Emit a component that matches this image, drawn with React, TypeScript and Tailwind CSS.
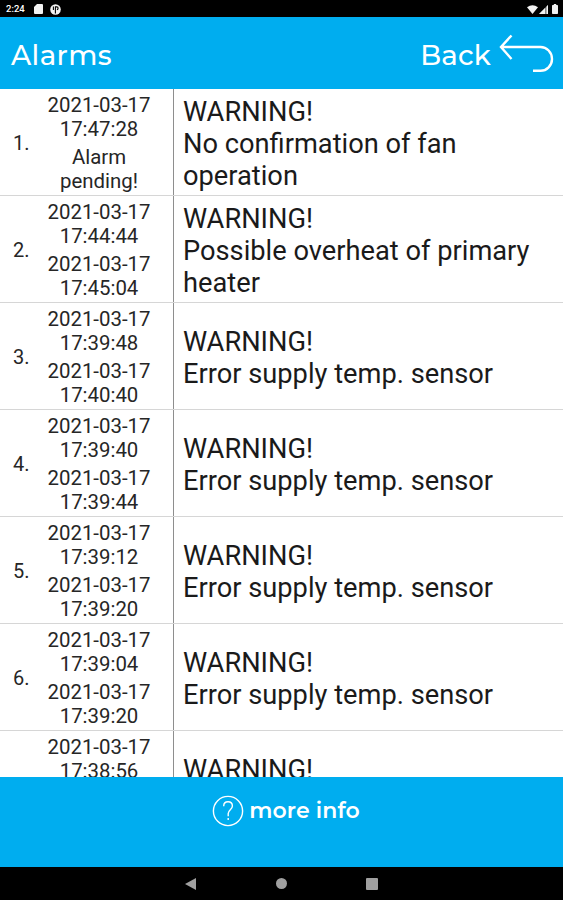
interface Alarm {
  raised: string
  // lines of the lower stamp, either a date and a time or a status
  cleared: [string, string]
  message: string
}

const day = "2021-03-17"

const alarms: Alarm[] = [
  { raised: "17:47:28", cleared: ["Alarm", "pending!"], message: "No confirmation of fan operation" },
  { raised: "17:44:44", cleared: [day, "17:45:04"], message: "Possible overheat of primary heater" },
  { raised: "17:39:48", cleared: [day, "17:40:40"], message: "Error supply temp. sensor" },
  { raised: "17:39:40", cleared: [day, "17:39:44"], message: "Error supply temp. sensor" },
  { raised: "17:39:12", cleared: [day, "17:39:20"], message: "Error supply temp. sensor" },
  { raised: "17:39:04", cleared: [day, "17:39:20"], message: "Error supply temp. sensor" },
  { raised: "17:38:56", cleared: [day, "17:39:00"], message: "Error supply temp. sensor" },
]

export default function App() {
  return (
    <div className="flex h-[900px] w-[563px] flex-col overflow-hidden bg-white font-[Roboto,sans-serif] text-[#262626]">
      <StatusBar />

      <header className="flex h-[72px] shrink-0 items-center justify-between bg-[#00adef] pt-[3px] pr-[9px] pl-[11px] font-[Montserrat,Inter,sans-serif] text-[27.6px] font-medium text-white">
        <h1 className="pt-[2px] tracking-[0.4px]">Alarms</h1>
        <button className="flex items-center gap-[8px]">
          <span className="pt-[2px] tracking-[0.2px]">Back</span>
          <BackArrow />
        </button>
      </header>

      <main className="min-h-0 flex-1 overflow-hidden">
        {alarms.map((a, i) => (
          <AlarmRow key={i} index={i + 1} alarm={a} />
        ))}
      </main>

      <footer className="flex h-[90px] shrink-0 items-start justify-center bg-[#00adef] pt-[17px] pl-[9px]">
        <button className="flex items-center gap-[5px] font-[Montserrat,Inter,sans-serif] text-[22px] leading-[32px] font-semibold text-white">
          <HelpIcon />
          <span className="pt-px tracking-[0.1px]">more info</span>
        </button>
      </footer>

      <NavBar />
    </div>
  )
}

function AlarmRow({ index, alarm }: { index: number; alarm: Alarm }) {
  return (
    <div className="flex h-[107px] border-b border-[#d6d6d6]">
      <div className="flex w-[25px] shrink-0 items-center pt-[2px] pl-[13px] text-[20px]">{index}.</div>
      <div className="flex w-[149px] shrink-0 flex-col justify-center gap-[4px] border-r border-[#8e8e8e] pt-[2px] text-center text-[20.4px] leading-[24px]">
        <p>{day}<br />{alarm.raised}</p>
        <p>{alarm.cleared[0]}<br />{alarm.cleared[1]}</p>
      </div>
      <div className="flex flex-1 flex-col justify-center pt-[3px] pr-4 pl-[9px] text-[27.25px] leading-[32px] text-[#1a1a1a]">
        <p>WARNING!</p>
        <p>{alarm.message}</p>
      </div>
    </div>
  )
}

function StatusBar() {
  return (
    <div className="flex h-[17px] shrink-0 items-center justify-between bg-black pt-px pr-[5px] pl-[6px] text-white">
      <div className="flex items-center">
        <span className="w-[20px] text-[9.5px] leading-none font-medium">2:24</span>
        <svg className="ml-[8px]" width="9" height="10" viewBox="0 0 9 10" fill="#f2f2f2">
          <path d="M3 0H8Q9 0 9 1V9Q9 10 8 10H1Q0 10 0 9V3Z" />
        </svg>
        <svg className="ml-[7px]" width="11" height="11" viewBox="0 0 11 11">
          <circle cx="5.5" cy="5.5" r="5.3" fill="#f2f2f2" />
          <path d="M3.4 2.4V6M5.4 9.4V2.9H6.9Q8.1 2.9 8.1 4.2T6.9 5.6" fill="none" stroke="#000" strokeWidth="1.1" />
        </svg>
      </div>
      <div className="flex items-center">
        <svg width="11" height="9" viewBox="0 0 11 9" fill="#f2f2f2">
          <path d="M5.5 9L0 2.2Q5.5-1.8 11 2.2Z" />
        </svg>
        <svg className="ml-[1px]" width="9" height="9" viewBox="0 0 9 9">
          <path d="M9 0V9H0Z" fill="#8c8c8c" />
          <path d="M6 3V9H0ZM7.6 1.4L9 0V9H7.6Z" fill="#f2f2f2" />
        </svg>
        <svg className="ml-[4px]" width="6" height="10" viewBox="0 0 6 10" fill="#f2f2f2">
          <path d="M1.8 0H4.2V1H5.2Q6 1 6 1.8V9.2Q6 10 5.2 10H.8Q0 10 0 9.2V1.8Q0 1 .8 1H1.8Z" />
        </svg>
      </div>
    </div>
  )
}

function BackArrow() {
  return (
    <svg width="55" height="40" viewBox="0 0 55 40" fill="none" stroke="#fff" strokeWidth="2.4">
      <path d="M12.5 1.5L2 13L12.5 25M2 13H41.5A11.5 11.9 0 0 1 41.5 36.8H34" />
    </svg>
  )
}

function HelpIcon() {
  return (
    <svg width="32" height="32" viewBox="0 0 32 32" fill="none" stroke="#fff" strokeWidth="1.4">
      <circle cx="16" cy="16" r="14.6" />
      <path d="M11.7 11.2C11.7 8.2 13.4 6.8 16 6.8S20.4 8.4 20.4 11.1C20.4 14.5 16.2 15.1 16.2 18.6V21.2M16.2 23V25" />
    </svg>
  )
}

function NavBar() {
  return (
    <nav className="flex h-[33px] shrink-0 items-center justify-center gap-[79px] bg-black">
      <svg width="12" height="14" viewBox="0 0 12 14" fill="#a0a0a0">
        <path d="M11 1V13L0 7Z" />
      </svg>
      <div className="size-[11px] rounded-full bg-[#a0a0a0]" />
      <div className="size-[12px] rounded-[1px] bg-[#a0a0a0]" />
    </nav>
  )
}
